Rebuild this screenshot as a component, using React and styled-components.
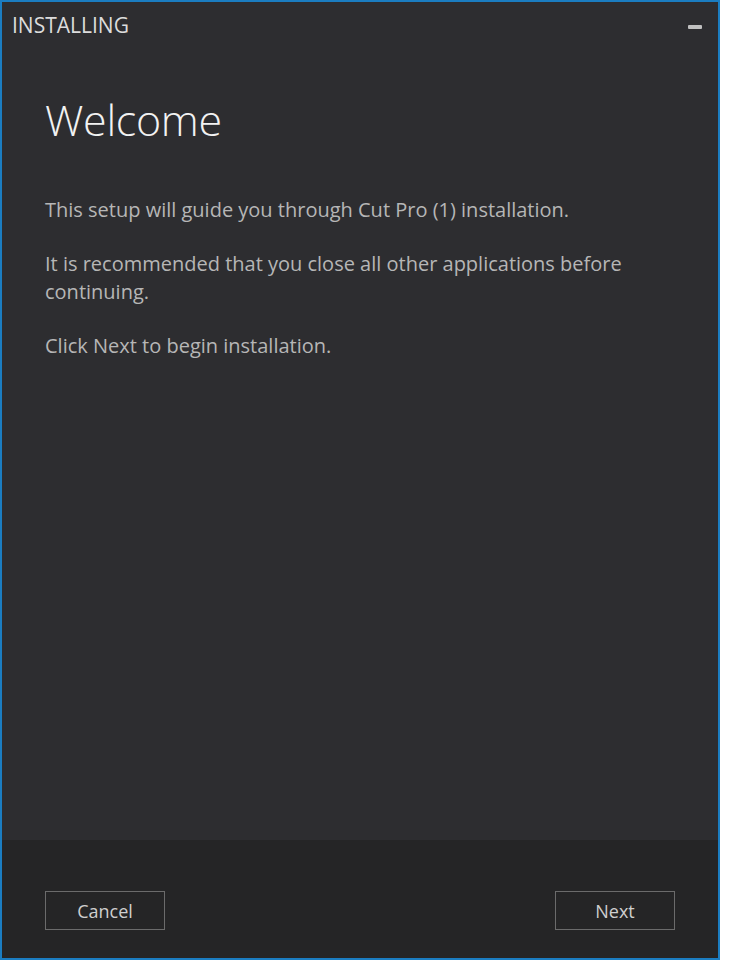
import React from "react";
import styled, { createGlobalStyle } from "styled-components";

const GlobalStyle = createGlobalStyle`
  html, body {
    margin: 0;
    padding: 0;
    background: #ffffff;
  }
  body {
    font-family: "Open Sans", "Noto Sans", "Liberation Sans", sans-serif;
  }
`;

const Window = styled.div`
  width: 720px;
  height: 960px;
  box-sizing: border-box;
  border: 2px solid #1b7dc1;
  background-color: #2d2d30;
  display: flex;
  flex-direction: column;
`;

const TitleBar = styled.div`
  height: 42px;
  display: flex;
  align-items: flex-start;
  justify-content: space-between;
  padding: 0 16px 0 10px;
`;

const Title = styled.div`
  font-size: 21px;
  line-height: 42px;
  margin-top: 2px;
  color: #dcdcdc;
`;

const MinimizeButton = styled.button`
  width: 14px;
  height: 4px;
  margin-top: 23px;
  padding: 0;
  border: none;
  border-radius: 1px;
  background-color: #c0c0c0;
  cursor: pointer;
`;

const Content = styled.div`
  flex: 1;
  padding: 48px 40px 0 43px;
`;

const Heading = styled.h1`
  margin: 0 0 48px;
  font-size: 43px;
  font-weight: 300;
  line-height: 56px;
  color: #f2f2f2;
  letter-spacing: -0.3px;
`;

const Paragraph = styled.p`
  margin: 0 0 26px;
  font-size: 20px;
  line-height: 28px;
  color: #b6b6b6;
  max-width: 622px;
`;

const Footer = styled.div`
  height: 118px;
  background-color: #252526;
  display: flex;
  align-items: flex-start;
  justify-content: space-between;
  padding: 51px 43px 0 43px;
  box-sizing: border-box;
`;

const Button = styled.button`
  width: 120px;
  height: 39px;
  box-sizing: border-box;
  border: 1px solid #6b6b6b;
  background: transparent;
  color: #cfcfcf;
  font-family: inherit;
  font-size: 18px;
  cursor: pointer;
`;

export default function App() {
  return (
    <>
      <GlobalStyle />
      <Window>
        <TitleBar>
          <Title>INSTALLING</Title>
          <MinimizeButton aria-label="Minimize" />
        </TitleBar>
        <Content>
          <Heading>Welcome</Heading>
          <Paragraph>This setup will guide you through Cut Pro (1) installation.</Paragraph>
          <Paragraph>
            It is recommended that you close all other applications before continuing.
          </Paragraph>
          <Paragraph>Click Next to begin installation.</Paragraph>
        </Content>
        <Footer>
          <Button>Cancel</Button>
          <Button>Next</Button>
        </Footer>
      </Window>
    </>
  );
}
